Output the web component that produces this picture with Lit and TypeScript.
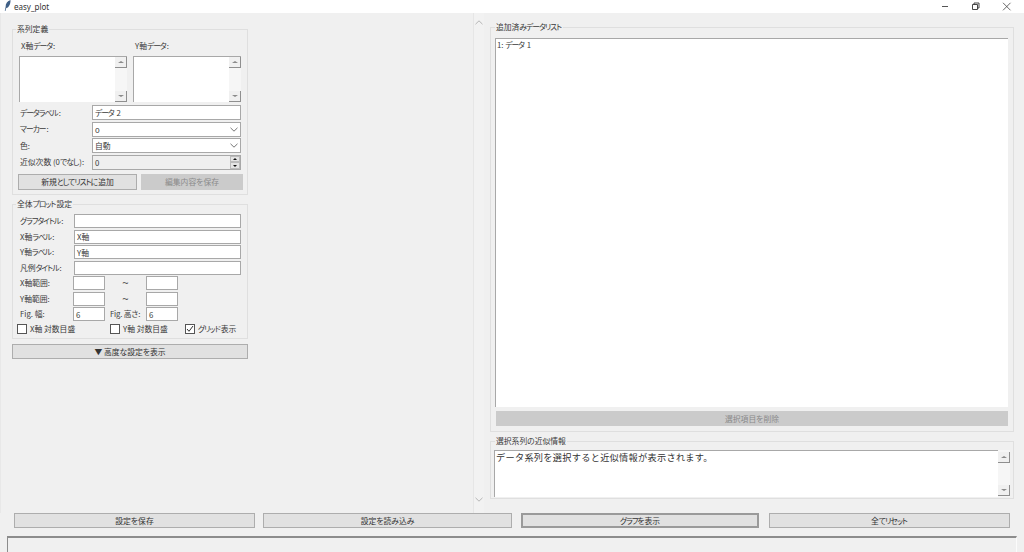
import { LitElement, html, css, svg } from "lit";
import { customElement } from "lit/decorators.js";

const chevron = svg`<svg class="chev" viewBox="0 0 8 5" width="8" height="5"><path d="M.5.8 4 4.2 7.5.8" fill="none" stroke="#666" stroke-width=".9"/></svg>`;

/* Kana are narrow in the original UI font: wrap kana runs so they can be condensed. */
const t = (s: string) =>
  s.split(/([\u3041-\u3096\u30a1-\u30fa\u30fc]+)/).map((p, i) => (i % 2 ? html`<span class="k">${p}</span>` : p));

@customElement("app-root")
export class AppRoot extends LitElement {
  static styles = css`
    :host {
      display: flex;
      flex-direction: column;
      width: 1024px;
      height: 552px;
      overflow: hidden;
      background: #f0f0f0;
      color: #3a3a3a;
      font: 7.8px/10px "Noto Sans CJK JP", "Noto Sans", sans-serif;
      font-feature-settings: "palt";
    }
    * { box-sizing: border-box; }
    .k { letter-spacing: -1px; margin-right: 1px; }
    .title { height: 13px; background: #fff; display: flex; align-items: center; position: relative; flex: none; }
    .feather { margin-left: 4px; width: 7px; height: 11px; margin-top: -2px; }
    .title span { margin-left: 3px; font: 8px/13px "Noto Sans", sans-serif; color: #333; }
    .winbtns { margin-left: auto; display: flex; }
    .winbtns svg { width: 29px; height: 12px; display: block; }
    .main { flex: none; height: 500px; display: flex; }
    .left { width: 473px; padding: 16px 0 0 12px; border-left: 1px solid #e8e8e8; flex: none; }
    .left > * { margin-left: -1px; }
    .vbar { width: 11px; flex: none; border-left: 1px solid #e6e6e6; background: #f2f2f2; display: flex; flex-direction: column; justify-content: space-between; align-items: center; padding: 7px 0 11px; }
    .vbar .up { transform: rotate(180deg); }
    .chev { display: block; }
    .right { margin-left: 6px; width: 524px; padding-top: 14px; flex: none; }
    .group { border: 1px solid #dfdfdf; width: 236px; }
    .legend { display: block; width: fit-content; height: 10px; margin-top: -6px; padding: 0 1px; background: #f0f0f0; white-space: nowrap; }
    .g1 { height: 166px; padding: 0 6px; }
    .g1 .legend { margin-left: -3px; margin-bottom: 7px; }
    .g2 { height: 135px; margin-top: 9px; padding: 0 6px; }
    .g2 .legend { margin-left: -3px; margin-bottom: 5px; }
    .boxes { display: grid; grid-template-columns: 108px 108px; column-gap: 6px; }
    .boxes .lab { height: 15px; padding-left: 2px; }
    .tb { height: 46px; display: flex; background: #fff; border-top: 1px solid #a8a8a8; border-left: 1px solid #a8a8a8; }
    .tb .fill { flex: 1; padding: 0 1px; }
    .sb { width: 12px; flex: none; background: #f6f6f6; display: flex; flex-direction: column; justify-content: space-between; }
    .sbtn { width: 12px; height: 11px; background: #f0f0f0; border-right: 1px solid #8f8f8f; border-bottom: 1px solid #8f8f8f; display: flex; align-items: center; justify-content: center; }
    .tri { width: 0; height: 0; border-left: 3px solid transparent; border-right: 3px solid transparent; }
    .tri.u { border-bottom: 2px solid #8a8a8a; }
    .tri.d { border-top: 2px solid #8a8a8a; }
    .rows { margin-top: 3px; display: grid; grid-template-columns: 73px 149px; grid-auto-rows: 15px; row-gap: 1.67px; align-items: center; }
    .rows .l { padding-left: 1px; white-space: nowrap; }
    .in { height: 100%; background: #fff; border: 1px solid #a8a8a8; padding: 0 2px; line-height: 13px; display: flex; align-items: center; justify-content: space-between; white-space: nowrap; }
    .in.ro { background: #efefef; }
    .spin { display: flex; flex-direction: column; width: 10px; height: 13px; margin-right: -2px; }
    .spin i { flex: 1; background: #e4e4e4; border: 1px solid #bbb; display: flex; align-items: center; justify-content: center; }
    .spin .tri { border-left-width: 2px; border-right-width: 2px; }
    .spin .tri.u { border-bottom-color: #111; }
    .spin .tri.d { border-top-color: #111; }
    .acts { margin: 4px 0 0 -1px; display: grid; grid-template-columns: 119px 102px; column-gap: 4px; height: 16px; }
    .btn { background: #e1e1e1; border: 1px solid #adadad; display: flex; align-items: center; justify-content: center; white-space: nowrap; color: #333; }
    .btn.off { background: #cbcbcb; border-color: #cbcbcb; color: #8a8a8a; }
    .plot { display: grid; grid-template-columns: 54px 32px 41px 32px 63px; grid-auto-rows: 14px; row-gap: 1.5px; align-items: center; }
    .plot .l { padding-left: 1px; white-space: nowrap; }
    .plot .wide { grid-column: 2 / 6; margin-left: 1px; }
    .plot .tilde { text-align: center; font: 11px/14px "Noto Sans", sans-serif; color: #555; }
    .plot .figl { padding-left: 5px; letter-spacing: -0.2px; }
    .checks { margin: 3px 0 0 -2px; display: grid; grid-template-columns: 93px 75px 1fr; height: 10px; }
    .ck { display: flex; align-items: center; gap: 3px; white-space: nowrap; }
    .ck b { width: 10px; height: 10px; background: #fff; border: 1px solid #555; display: block; flex: none; }
    .ck svg { display: block; width: 8px; height: 8px; }
    .adv { margin-top: 5px; width: 236px; height: 15px; }
    .rg1 { width: 524px; height: 405px; padding: 0 5px 0 4px; border: 1px solid #dfdfdf; }
    .rg1 .legend { margin-left: 0; margin-bottom: 6px; }
    .list { height: 369px; background: #fff; border-top: 1px solid #a8a8a8; border-left: 1px solid #a8a8a8; padding: 1px; }
    .del { margin: 4px 0 0 1px; width: 512px; height: 15px; }
    .rg2 { width: 524px; height: 58px; margin-top: 9px; border: 1px solid #dfdfdf; padding: 0 3px; }
    .rg2 .legend { margin-left: 1px; margin-bottom: 4px; }
    .info { display: flex; height: 47px; }
    .info .txt { flex: 1; background: #fff; border-top: 1px solid #a8a8a8; border-left: 1px solid #a8a8a8; font-size: 9.2px; line-height: 12px; padding: 0 1px; letter-spacing: 0.28px; font-feature-settings: normal; color: #333; }
    .info .sb { padding: 2px 0 1px; }
    .actions { height: 23px; padding: 0 14px; display: grid; grid-template-columns: 241px 249px 239px 243px; column-gap: 8px; flex: none; align-items: start; }
    .actions .btn { height: 15px; }
    .actions .btn:nth-child(3) { margin-left: 1px; }
    .actions .btn:nth-child(4) { margin-left: 2px; }
    .btn.def { border: 2px solid #9a9a9a; }
    .status { flex: 1; margin: 0 7px; border-top: 2px solid #8c8c8c; border-left: 1px solid #8c8c8c; border-right: 1px solid #fbfbfb; }
  `;

  private sb() {
    return html`<div class="sb"><div class="sbtn"><span class="tri u"></span></div><div class="sbtn"><span class="tri d"></span></div></div>`;
  }

  render() {
    return html`
      <div class="title">
        <svg class="feather" viewBox="0 0 7 11"><path d="M6.500 0C3.500 1 1.500 3.500 1.600 7L.8 11h.6l.9-3C5 7.600 6.600 4 6.500 0Z" fill="#3f5f86"/></svg>
        <span>easy_plot</span>
        <div class="winbtns">
          <svg viewBox="0 0 29 12"><path d="M11 5.500h6" stroke="#555" stroke-width="1"/></svg>
          <svg viewBox="0 0 29 12"><path d="M12.500 3.500h5v5h-5zM14 3.500V2h5v5h-1.500" fill="none" stroke="#333" stroke-width=".9"/></svg>
          <svg viewBox="0 0 29 12"><path d="M14 1.800l7.500 7.500M21.500 1.800L14 9.300" stroke="#444" stroke-width=".8"/></svg>
          <svg viewBox="0 0 6 12" style="width:6px"></svg>
        </div>
      </div>
      <div class="main">
        <div class="left">
          <div class="group g1">
            <span class="legend">${t("系列定義")}</span>
            <div class="boxes">
              <div class="lab">${t("X軸データ:")}</div><div class="lab">${t("Y軸データ:")}</div>
              <div class="tb"><div class="fill"></div>${this.sb()}</div>
              <div class="tb"><div class="fill"></div>${this.sb()}</div>
            </div>
            <div class="rows">
              <div class="l">${t("データラベル:")}</div><div class="in"><span>${t("データ 2")}</span></div>
              <div class="l">${t("マーカー:")}</div><div class="in">o${chevron}</div>
              <div class="l">色:</div><div class="in">自動${chevron}</div>
              <div class="l">${t("近似次数 (0でなし):")}</div>
              <div class="in ro">0<div class="spin"><i><span class="tri u"></span></i><i><span class="tri d"></span></i></div></div>
            </div>
            <div class="acts">
              <div class="btn"><span>${t("新規としてリストに追加")}</span></div>
              <div class="btn off"><span>${t("編集内容を保存")}</span></div>
            </div>
          </div>
          <div class="group g2">
            <span class="legend">${t("全体プロット設定")}</span>
            <div class="plot">
              <div class="l">${t("グラフタイトル:")}</div><div class="in wide"></div>
              <div class="l">${t("X軸ラベル:")}</div><div class="in wide">X軸</div>
              <div class="l">${t("Y軸ラベル:")}</div><div class="in wide">Y軸</div>
              <div class="l">${t("凡例タイトル:")}</div><div class="in wide"></div>
              <div class="l">X軸範囲:</div><div class="in"></div><div class="tilde">~</div><div class="in"></div><div></div>
              <div class="l">Y軸範囲:</div><div class="in"></div><div class="tilde">~</div><div class="in"></div><div></div>
              <div class="l">Fig. 幅:</div><div class="in">6</div><div class="l figl">${t("Fig. 高さ:")}</div><div class="in">6</div><div></div>
            </div>
            <div class="checks">
              <div class="ck"><b></b>X軸 対数目盛</div>
              <div class="ck"><b></b>Y軸 対数目盛</div>
              <div class="ck"><b><svg viewBox="0 0 8 8"><path d="M1 4l2 2.300L7 1" fill="none" stroke="#333" stroke-width="1"/></svg></b><span>${t("グリッド表示")}</span></div>
            </div>
          </div>
          <div class="btn adv"><span>▼ ${t("高度な設定を表示")}</span></div>
        </div>
        <div class="vbar"><svg class="chev up" viewBox="0 0 8 5" width="8" height="5"><path d="M.5.8 4 4.200 7.500.8" fill="none" stroke="#b5b5b5" stroke-width="1"/></svg><svg class="chev" viewBox="0 0 8 5" width="8" height="5"><path d="M.5.8 4 4.200 7.500.8" fill="none" stroke="#b5b5b5" stroke-width="1"/></svg></div>
        <div class="right">
          <div class="rg1">
            <span class="legend">${t("追加済みデータリスト")}</span>
            <div class="list">${t("1: データ 1")}</div>
            <div class="btn off del"><span>${t("選択項目を削除")}</span></div>
          </div>
          <div class="rg2">
            <span class="legend">${t("選択系列の近似情報")}</span>
            <div class="info">
              <div class="txt">データ系列を選択すると近似情報が表示されます。</div>
              ${this.sb()}
            </div>
          </div>
        </div>
      </div>
      <div class="actions">
        <div class="btn"><span>${t("設定を保存")}</span></div>
        <div class="btn"><span>${t("設定を読み込み")}</span></div>
        <div class="btn def"><span>${t("グラフを表示")}</span></div>
        <div class="btn"><span>${t("全てリセット")}</span></div>
      </div>
      <div class="status"></div>
    `;
  }
}
